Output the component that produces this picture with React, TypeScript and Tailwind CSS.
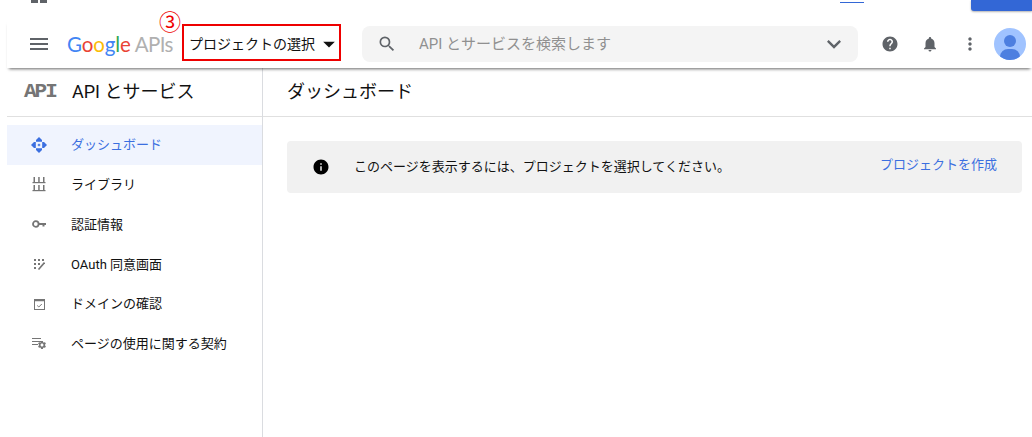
import React from "react";
import {
  MdArrowDropDown,
  MdExpandMore,
  MdHelp,
  MdInfo,
  MdMenu,
  MdMoreVert,
  MdNotifications,
  MdSearch,
  MdSettings,
} from "react-icons/md";

const DashboardIcon = () => (
  <svg width="16" height="16" viewBox="0 0 16 16" fill="#3b6fe0">
    <path d="M8 0 11 3V4.8H5V3Z" />
    <path d="M8 16 11 13V11.2H5V13Z" />
    <path d="M0 8 3 5H4.8V11H3Z" />
    <path d="M16 8 13 5H11.2V11H13Z" />
    <circle cx="8" cy="8" r="1.3" />
    <circle cx="8" cy="8" r="0.5" fill="#f0f4fe" />
  </svg>
);

const LibraryIcon = () => (
  <svg width="14" height="15" viewBox="0 0 14 15" fill="#757575">
    <rect x="1.5" y="0" width="1.5" height="5" />
    <rect x="6.2" y="0" width="1.5" height="5" />
    <rect x="11" y="0" width="1.5" height="5" />
    <rect x="0.5" y="5" width="13" height="1.2" />
    <rect x="1.5" y="8" width="1.5" height="5" />
    <rect x="6.2" y="8" width="1.5" height="5" />
    <rect x="11" y="8" width="1.5" height="5" />
    <rect x="0.5" y="13" width="13" height="1.2" />
  </svg>
);

const KeyIcon = () => (
  <svg width="14" height="8" viewBox="0 0 14 8" fill="#757575">
    <circle cx="3.8" cy="4" r="2.8" fill="none" stroke="#757575" strokeWidth="1.8" />
    <path d="M6.5 3H14V5H12.5V6.5H10.5V5H6.5Z" />
  </svg>
);

const ConsentIcon = () => (
  <svg width="11" height="11" viewBox="0 0 11 11" fill="#757575">
    <rect x="0" y="0" width="2" height="2" />
    <rect x="4" y="0" width="2" height="2" />
    <rect x="8" y="0" width="2" height="2" />
    <rect x="0" y="4" width="2" height="2" />
    <rect x="4" y="4" width="2" height="2" />
    <rect x="0" y="8" width="2" height="2" />
    <path d="M10.5 3.5 4.5 10.5" stroke="#757575" strokeWidth="1.6" fill="none" />
  </svg>
);

const DomainIcon = () => (
  <svg width="11" height="11" viewBox="0 0 11 11" fill="none" stroke="#757575">
    <rect x="0.5" y="0.5" width="10" height="10" />
    <path d="M0 1.5H11" strokeWidth="1.5" />
    <path d="M3.2 6.5 4.8 8 7.8 5" />
  </svg>
);

const TermsIcon = () => (
  <div className="relative w-[15px] h-[12px]">
    <div className="w-[9px] h-[1.5px] bg-[#757575]" />
    <div className="w-[9px] h-[1.5px] mt-[1.5px] bg-[#757575]" />
    <div className="w-[6px] h-[1.5px] mt-[1.5px] bg-[#757575]" />
    <MdSettings size={10} color="#757575" className="absolute right-0 bottom-0" />
  </div>
);

const navItems = [
  { label: "ダッシュボード", icon: <DashboardIcon />, active: true },
  { label: "ライブラリ", icon: <LibraryIcon /> },
  { label: "認証情報", icon: <KeyIcon /> },
  { label: "OAuth 同意画面", icon: <ConsentIcon /> },
  { label: "ドメインの確認", icon: <DomainIcon /> },
  { label: "ページの使用に関する契約", icon: <TermsIcon /> },
];

export default function App() {
  return (
    <div className="w-[1032px] h-[437px] overflow-hidden bg-white pl-[7px] font-['Roboto','Noto_Sans_CJK_JP',sans-serif] text-[#111111]">
      <div className="h-5 flex items-start">
        <div className="ml-6 w-[16px] h-[3px] flex gap-[2px]">
          <div className="w-[7px] h-[3px] bg-[#5f6368]" />
          <div className="w-[7px] h-[3px] bg-[#5f6368]" />
        </div>
        <div className="ml-[793px] mt-[2px] w-6 h-px bg-[#3367d6]" />
        <div className="ml-[107px] w-[61px] h-[11px] bg-[#3367d6] rounded-bl-[3px] shadow-[0_1px_2px_rgba(0,0,0,0.3)]" />
      </div>

      <header className="relative z-10 h-12 flex items-center bg-white shadow-[0_3px_3px_-2px_rgba(0,0,0,0.6)]">
        <MdMenu size={24} color="#5f6368" className="ml-5 shrink-0" />
        <div className="ml-4 w-[115px] shrink-0 text-[20.5px] leading-none tracking-[-0.1px] font-['Lato',sans-serif] whitespace-nowrap">
          <span className="text-[#4285f4]">G</span>
          <span className="text-[#ea4335]">o</span>
          <span className="text-[#fbbc05]">o</span>
          <span className="text-[#4285f4]">g</span>
          <span className="text-[#34a853]">l</span>
          <span className="text-[#ea4335]">e</span>
          <span className="text-[#b0b0b0] tracking-[-0.6px]"> APIs</span>
        </div>
        <div className="relative self-start mt-1 w-[159px] h-[37px] border-2 border-[#ee0000] flex items-center pl-[5px] pt-[3px] shrink-0">
          <span className="text-sm whitespace-nowrap">プロジェクトの選択</span>
          <MdArrowDropDown size={28} color="#111111" className="shrink-0" />
          <span className="absolute -left-[25px] -top-[14px] text-[22px] leading-[22px] text-[#ee0000]">③</span>
        </div>
        <div className="ml-[21px] w-[496px] h-9 rounded-lg bg-[#f4f4f4] flex items-center pl-[15px] pr-[10px] shrink-0">
          <MdSearch size={20} color="#5f6368" className="shrink-0" />
          <span className="ml-[22px] text-[15px] text-[#909090] whitespace-nowrap">API とサービスを検索します</span>
          <MdExpandMore size={28} color="#5f6368" className="ml-auto shrink-0" />
        </div>
        <MdHelp size={18} color="#5f6368" className="ml-[23px] shrink-0" />
        <MdNotifications size={18} color="#5f6368" className="ml-[22px] shrink-0" />
        <MdMoreVert size={20} color="#5f6368" className="ml-[21px] shrink-0" />
        <div className="ml-[14px] w-8 h-8 rounded-full bg-[#a0c3ff] overflow-hidden relative shrink-0">
          <div className="absolute left-[10px] top-[7px] w-3 h-3 rounded-full bg-[#4d7fe0]" />
          <div className="absolute left-[6px] top-[21px] w-5 h-4 rounded-full bg-[#4d7fe0]" />
        </div>
      </header>

      <div className="flex h-[369px]">
        <aside className="w-[256px] shrink-0 border-r border-[#dadce0]">
          <div className="h-[49px] flex items-center border-b border-[#e0e0e0] pb-[2px]">
            <span className="ml-[17px] w-[34px] text-[21px] leading-none font-bold font-['Liberation_Mono',monospace] text-[#757575] tracking-[-2px]">API</span>
            <span className="ml-[14px] text-[18px] whitespace-nowrap">API とサービス</span>
          </div>
          <nav className="mt-2">
            {navItems.map((item) => (
              <div
                key={item.label}
                className={`h-[39.8px] flex items-center ${item.active ? "bg-[#f0f4fe] text-[#3b6fe0]" : ""}`}
              >
                <div className="w-[64px] flex justify-center shrink-0">{item.icon}</div>
                <span className="text-[13px] whitespace-nowrap">{item.label}</span>
              </div>
            ))}
          </nav>
        </aside>

        <main className="flex-1 min-w-0">
          <div className="h-[49px] flex items-center border-b border-[#e0e0e0] pl-6 pb-[2px]">
            <h1 className="text-[18px]">ダッシュボード</h1>
          </div>
          <div className="mt-6 ml-6 mr-[10px] h-[52px] rounded bg-[#f1f1f1] flex items-center pl-[25px] pr-[25px]">
            <MdInfo size={18} color="#000000" className="shrink-0" />
            <p className="ml-[24px] text-[13px] whitespace-nowrap">このページを表示するには、プロジェクトを選択してください。</p>
            <a className="ml-auto -mt-[5px] text-[13px] text-[#3b6fe0] whitespace-nowrap">プロジェクトを作成</a>
          </div>
        </main>
      </div>
    </div>
  );
}
